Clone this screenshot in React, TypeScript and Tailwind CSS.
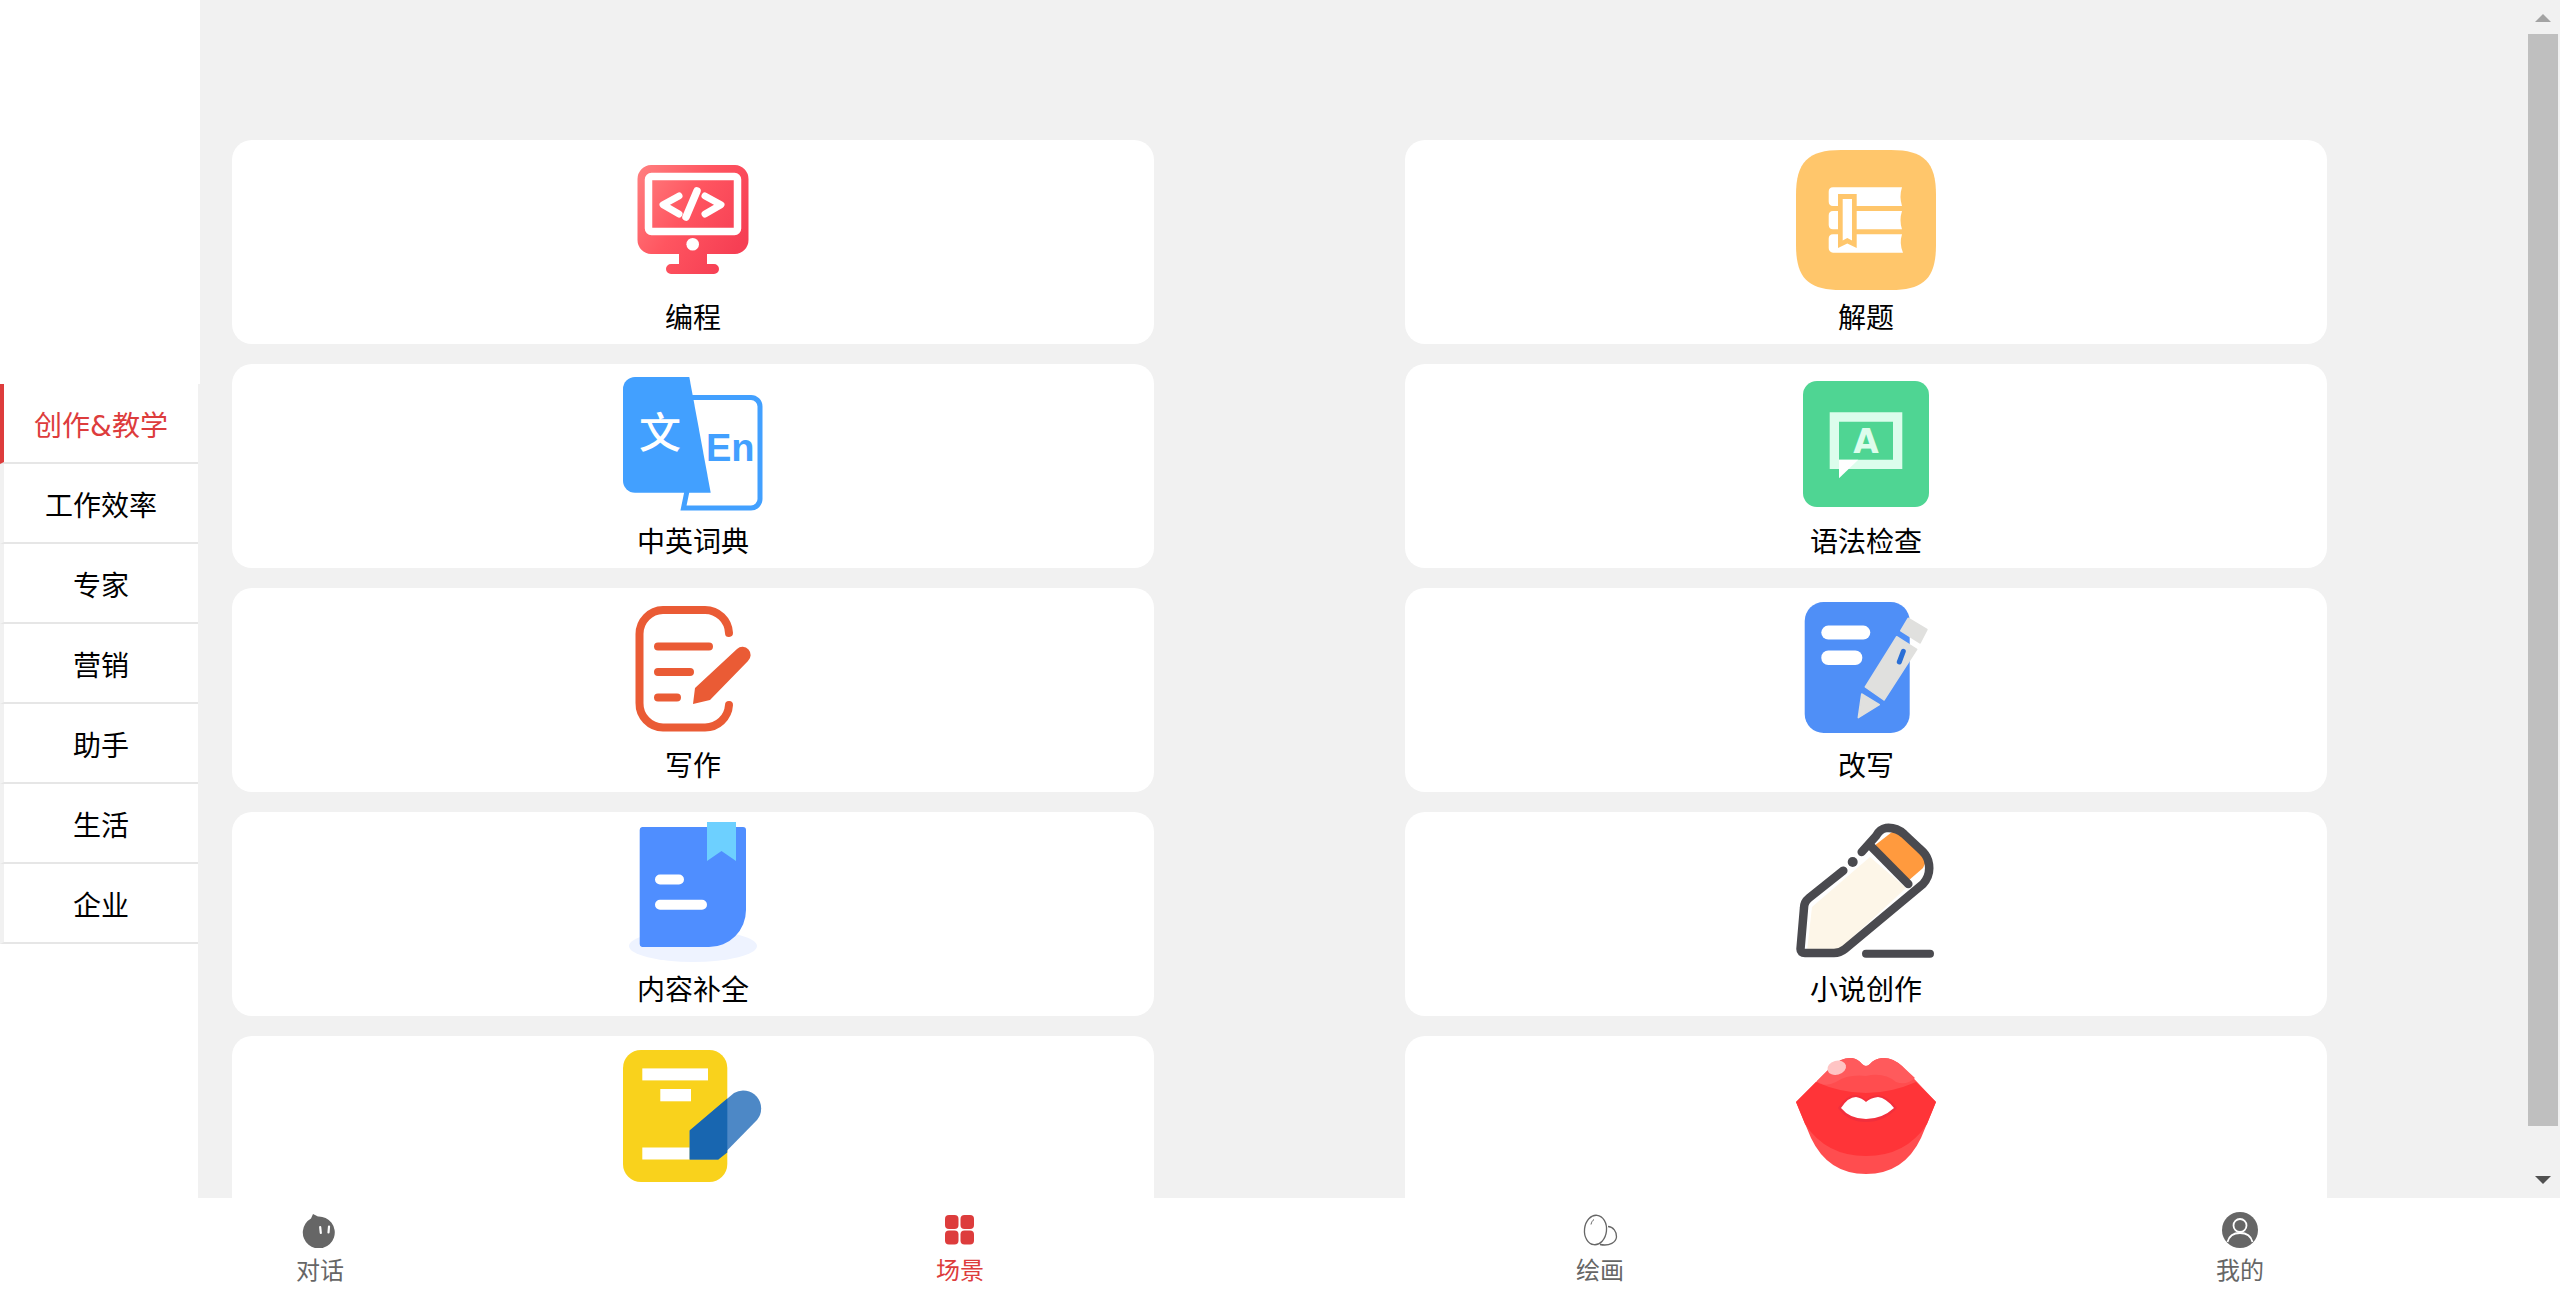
import React from "react";

const FONT = "font-['Noto_Sans_CJK_SC','Liberation_Sans',sans-serif]";

function Box({ children }: { children: React.ReactNode }) {
  return (
    <svg viewBox="0 0 140 140" className="w-[140px] h-[140px] shrink-0 block">
      {children}
    </svg>
  );
}

const CodeIcon = () => (
  <Box>
    <defs>
      <linearGradient id="codeG" x1="0" y1="0" x2="1" y2="0.6">
        <stop offset="0" stopColor="#ff8080" />
        <stop offset="0.5" stopColor="#ff5560" />
        <stop offset="1" stopColor="#f63f54" />
      </linearGradient>
    </defs>
    <path
      d="M28 15H112A14 14 0 0 1 125.5 29V90A14 14 0 0 1 112 104H84V114H91A5 5 0 0 1 91 124H48A5 5 0 0 1 48 114H56V104H28A14 14 0 0 1 14.500 90V29A14 14 0 0 1 28 15Z"
      fill="url(#codeG)"
    />
    <rect x="25.500" y="26.500" width="89" height="55" rx="3" fill="none" stroke="#fff" strokeWidth="7.500" />
    <circle cx="69.700" cy="94.300" r="6.300" fill="#fff" />
    <path d="M56 46L40 54.700L56 64M82 46L98 54.700L82 64" fill="none" stroke="#fff" strokeWidth="7" strokeLinecap="round" strokeLinejoin="round" />
    <path d="M74 41L63 67" fill="none" stroke="#fff" strokeWidth="7.500" strokeLinecap="round" />
  </Box>
);

const DictIcon = () => (
  <Box>
    <path d="M67 23.500H128A9 9 0 0 1 137 32.500V125A9 9 0 0 1 128 134H60.500L64 117" fill="none" stroke="#42a0ff" strokeWidth="5" />
    <path d="M12 3H66.300L87.700 118.700H12A12 12 0 0 1 0 106.700V15A12 12 0 0 1 12 3Z" fill="#42a0ff" />
    <text x="37" y="74" textAnchor="middle" fontSize="42" fontWeight="500" fill="#fff" fontFamily="'Noto Sans CJK SC',sans-serif">文</text>
    <text x="83" y="87" fontSize="38" fontWeight="700" fill="#42a0ff" fontFamily="'Liberation Sans',sans-serif">En</text>
  </Box>
);

const SolveIcon = () => (
  <Box>
    <path d="M45 0H95C128 0 140 12 140 45V95C140 128 128 140 95 140H45C12 140 0 128 0 95V45C0 12 12 0 45 0Z" fill="#ffc66b" />
    <path d="M37 37.300H106Q103 46.500 106 56H37A4.500 4.500 0 0 1 32.700 51.500V41.800A4.500 4.500 0 0 1 37 37.300Z" fill="#fff" />
    <path d="M37 61H106Q103 70 106 79.300H37A4.500 4.500 0 0 1 32.700 75V65.500A4.500 4.500 0 0 1 37 61Z" fill="#fff" />
    <path d="M37 84.300H106Q103 93.500 107 102.700H37A4.500 4.500 0 0 1 32.700 98V88.800A4.500 4.500 0 0 1 37 84.300Z" fill="#fff" />
    <path d="M42 44H60.700V98L51.300 93.500L42 98Z" fill="#ffc66b" />
    <path d="M46.700 49H56V90.500L51.300 88L46.700 90.500Z" fill="#fff" />
  </Box>
);

const GrammarIcon = () => (
  <Box>
    <rect x="7" y="7" width="126" height="126" rx="14" fill="#4fd593" />
    <path fillRule="evenodd" d="M33.700 38.300H106.300V95H33.700ZM43 47.700V85.700H97V47.700Z" fill="#dcfdec" />
    <path d="M43 85.700H62.300L43 104.300Z" fill="#fff" />
    <text x="70" y="78.700" textAnchor="middle" fontSize="33" fontWeight="700" fill="#dcfdec" fontFamily="'DejaVu Sans',sans-serif">A</text>
  </Box>
);

const WriteIcon = () => (
  <Box>
    <path d="M106 35A24 24 0 0 0 82 12H40A24 24 0 0 0 16.500 36V105A24 24 0 0 0 40 129.500H82A24 24 0 0 0 106 107" fill="none" stroke="#ea5b35" strokeWidth="8" strokeLinecap="round" />
    <path d="M35 48.500H86M35 74H67M35 99.500H54" fill="none" stroke="#ea5b35" strokeWidth="8" strokeLinecap="round" />
    <path d="M72 90L114 51A8 8 0 0 1 125 63L87 102L70 106Z" fill="#ea5b35" />
  </Box>
);

const RewriteIcon = () => (
  <Box>
    <rect x="8.700" y="4" width="105" height="131" rx="19" fill="#4f8ff7" />
    <rect x="25.300" y="27.600" width="49" height="14" rx="7" fill="#fff" />
    <rect x="25.300" y="52.500" width="41" height="14.500" rx="7" fill="#fff" />
    <path d="M100.700 38.700L120.700 51.300L88 102L69.300 89Z" fill="#e0e0de" stroke="#e0e0de" strokeWidth="1.500" strokeLinejoin="round" />
    <path d="M65.700 96L83.300 106.700L62.300 119.700Z" fill="#e0e0de" stroke="#e0e0de" strokeWidth="1.500" strokeLinejoin="round" />
    <path d="M112.300 20.500L130.700 31.500L124 44.600L105 32.700Z" fill="#e0e0de" stroke="#e0e0de" strokeWidth="2" strokeLinejoin="round" />
    <path d="M107.300 53.300L103.300 64" stroke="#2a6fd6" strokeWidth="5" strokeLinecap="round" />
  </Box>
);

const CompleteIcon = () => (
  <Box>
    <ellipse cx="70" cy="124" rx="64" ry="16" fill="#eef3ff" />
    <path d="M19 5H120A3 3 0 0 1 123 8V88A37 37 0 0 1 86 125H19A3 3 0 0 1 16.700 122V8A3 3 0 0 1 19 5Z" fill="#4f8eff" />
    <path d="M84 0H113V39L98.500 29L84 39Z" fill="#6dd0ff" />
    <path d="M37 57.500H56M37 82.700H79" stroke="#fff" strokeWidth="10" strokeLinecap="round" />
  </Box>
);

const NovelIcon = () => (
  <Box>
    <path d="M16 85L74 35L110 66L46 125Q42 129 36 129H11Z" fill="#fdf6e8" />
    <path d="M78 24L96 10Q104 7 112 14L128 28Q133 36 127 46L112 59Z" fill="#ff9a3e" />
    <path d="M47.300 48.700L13 76Q8 80 8 86L4.500 127Q4.500 131 9 131H38Q44 131 49 127L127 62Q136 52 132 38Q130 32 124 27L108 12Q100 5 90 6Q84 7 80 14L65.700 30" fill="none" stroke="#4a4a4f" strokeWidth="8.500" strokeLinecap="round" strokeLinejoin="round" />
    <circle cx="56.700" cy="40" r="5" fill="#4a4a4f" />
    <path d="M75.700 25L112.300 62" stroke="#4a4a4f" strokeWidth="8.500" strokeLinecap="round" />
    <path d="M70 131.800H134" stroke="#4a4a4f" strokeWidth="8" strokeLinecap="round" />
  </Box>
);

const ScriptIcon = () => (
  <Box>
    <rect x="0" y="4" width="104.300" height="132" rx="18" fill="#f9d21c" />
    <rect x="19.300" y="22.400" width="65.700" height="12" fill="#fff" />
    <rect x="37.300" y="43" width="30.700" height="12.300" fill="#fff" />
    <rect x="19.300" y="101.500" width="47.400" height="12" fill="#fff" />
    <path d="M66.700 84.500L111 47A18 18 0 0 1 134 74L95.300 113.500H66.700Z" fill="#4d88c6" />
    <path d="M66.700 84.500L104.300 52.600V106.500L95.300 113.500H66.700Z" fill="#1866b0" />
  </Box>
);

const LipsIcon = () => (
  <Box>
    <path d="M0 56L36 20Q46 11 56 12Q62 13 66 18Q70 22 74 18Q78 13 86 12Q96 11 106 20L140 56L125 92Q108 128 70 128Q32 128 15 92Z" fill="#ff4d4f" />
    <path d="M0 56L20 36Q70 58 120 36L140 56L131 78Q110 110 70 110Q30 110 9 78Z" fill="#ff3438" />
    <path d="M21 35L36 20Q46 11 56 12Q62 13 66 18Q70 22 74 18Q78 13 86 12Q96 11 106 20L119 32Q110 40 100 36Q88 26 70 30Q52 28 40 36Q28 42 21 35Z" fill="#ff5a5c" />
    <path d="M42 62Q50 49 60 49Q66 50 70 54Q74 50 82 49Q92 50 101 62Q88 76 70 76Q52 76 42 62Z" fill="#f22f3c" />
    <path d="M45 62Q52 51 60 51Q66 52 70 56Q74 52 82 51Q90 52 98 62Q86 73 70 73Q54 73 45 62Z" fill="#fff" />
    <ellipse cx="40.700" cy="21.700" rx="9.500" ry="7" fill="#ffc4c4" transform="rotate(-15 40.700 21.700)" />
  </Box>
);

type Scene = { label?: string; icon: React.ReactNode };

const scenes: Scene[] = [
  { label: "编程", icon: <CodeIcon /> },
  { label: "解题", icon: <SolveIcon /> },
  { label: "中英词典", icon: <DictIcon /> },
  { label: "语法检查", icon: <GrammarIcon /> },
  { label: "写作", icon: <WriteIcon /> },
  { label: "改写", icon: <RewriteIcon /> },
  { label: "内容补全", icon: <CompleteIcon /> },
  { label: "小说创作", icon: <NovelIcon /> },
  { icon: <ScriptIcon /> },
  { icon: <LipsIcon /> },
];

const tabs: { key: string; label: React.ReactNode }[] = [
  {
    key: "create",
    label: (
      <>
        创作<span className="font-['DejaVu_Sans'] leading-none">&amp;</span>教学
      </>
    ),
  },
  { key: "work", label: "工作效率" },
  { key: "expert", label: "专家" },
  { key: "market", label: "营销" },
  { key: "helper", label: "助手" },
  { key: "life", label: "生活" },
  { key: "biz", label: "企业" },
];

const ChatGlyph = () => (
  <svg viewBox="0 0 36 36" className="w-[36px] h-[36px] block">
    <path d="M11 2L16 4.500A16 16 0 1 1 9 6.500Z" fill="#666" />
    <path d="M18.200 15.200L18.800 21M27 14.500L26.500 20.500" stroke="#fff" strokeWidth="2.200" strokeLinecap="round" />
  </svg>
);

const GridGlyph = () => (
  <svg viewBox="0 0 36 36" className="w-[36px] h-[36px] block">
    <rect x="3" y="3" width="13.500" height="14" rx="4" fill="#dd3c3c" />
    <rect x="18.500" y="3" width="13.500" height="14" rx="4" fill="#dd3c3c" />
    <rect x="3" y="18.500" width="13.500" height="14" rx="4" fill="#dd3c3c" />
    <rect x="18.500" y="18.500" width="13.500" height="14" rx="4" fill="#dd3c3c" />
  </svg>
);

const EggGlyph = () => (
  <svg viewBox="0 0 36 36" className="w-[36px] h-[36px] block" fill="none" stroke="#666" strokeWidth="1.300">
    <ellipse cx="13.500" cy="18" rx="11" ry="14.800" transform="rotate(6 13.500 18)" />
    <path d="M26 14.500C31 14.500 35 20 34.500 25C34 30 28 34.500 18 32.500" />
    <path d="M9 12.500C9.500 10 10.500 8.500 12 7.500" strokeWidth="1" />
  </svg>
);

const UserGlyph = () => (
  <svg viewBox="0 0 36 36" className="w-[36px] h-[36px] block">
    <circle cx="18" cy="18" r="18" fill="#666" />
    <circle cx="18" cy="13.500" r="6.500" fill="none" stroke="#fff" strokeWidth="1.800" />
    <path d="M5.500 30C7 24 12 21 18 21C24 21 29 24 30.500 30" fill="none" stroke="#fff" strokeWidth="1.800" />
  </svg>
);

const nav = [
  { label: "对话", icon: <ChatGlyph />, active: false },
  { label: "场景", icon: <GridGlyph />, active: true },
  { label: "绘画", icon: <EggGlyph />, active: false },
  { label: "我的", icon: <UserGlyph />, active: false },
];

export default function App() {
  return (
    <div className={`w-[2560px] h-[1298px] flex flex-col overflow-hidden bg-white ${FONT}`}>
      <div className="h-[1198px] flex overflow-hidden bg-[#f1f1f1]">
        <aside className="w-[200px] shrink-0 flex flex-col">
          <div className="h-[384px] bg-white" />
          <div className="flex-1 flex flex-col mr-[2px] bg-white">
            {tabs.map((t, i) => (
              <div
                key={t.key}
                className={
                  i === 0
                    ? "h-[80px] pt-[2px] flex items-center justify-center border-l-[4px] border-l-[#dd3c3c] border-b-2 border-b-[#e6e6e6] text-[28px] text-[#dd3c3c]"
                    : "h-[80px] pt-[2px] flex items-center justify-center border-l-[4px] border-l-[#f1f1f1] border-b-2 border-b-[#e6e6e6] text-[28px] text-black"
                }
              >
                <div>{t.label}</div>
              </div>
            ))}
          </div>
        </aside>
        <main className="flex-1 overflow-hidden pt-[140px] pl-[32px]">
          <div className="grid grid-cols-[922px_922px] gap-x-[251px] gap-y-[20px]">
            {scenes.map((s, i) => (
              <div key={i} className="h-[204px] bg-white rounded-[20px] flex flex-col items-center pt-[10px]">
                {s.icon}
                {s.label && <div className="text-[28px] leading-[38px] mt-[7px] text-black">{s.label}</div>}
              </div>
            ))}
          </div>
        </main>
        <div className="w-[32px] shrink-0 flex flex-col items-start">
          <svg viewBox="0 0 16 8" className="w-[16px] h-[8px] mt-[14px] ml-[7px] block">
            <path d="M8 0L16 8H0Z" fill="#a3a3a3" />
          </svg>
          <div className="w-[30px] h-[1092px] mt-[12px] bg-[#bfbfbf]" />
          <svg viewBox="0 0 16 8" className="w-[16px] h-[8px] mt-[50px] ml-[7px] block">
            <path d="M0 0H16L8 8Z" fill="#505050" />
          </svg>
        </div>
      </div>
      <nav className="h-[100px] flex bg-white">
        {nav.map((n) => (
          <div key={n.label} className="flex-1 flex flex-col items-center pt-[14px]">
            {n.icon}
            <div className={n.active ? "text-[24px] leading-[32px] mt-[5px] text-[#dd3c3c]" : "text-[24px] leading-[32px] mt-[5px] text-[#666]"}>
              {n.label}
            </div>
          </div>
        ))}
      </nav>
    </div>
  );
}
